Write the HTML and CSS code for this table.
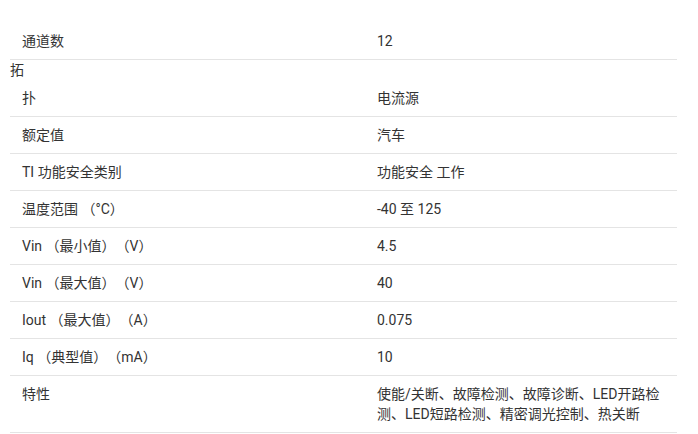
FILE: index.html
```html
<!DOCTYPE html>
<html lang="zh">
<head>
<meta charset="utf-8">
<link rel="stylesheet" href="styles.css">
</head>
<body>
<div class="specs">
  <div class="row"><div class="k">通道数</div><div class="v">12</div></div>
  <div class="stray">拓</div>
  <div class="row"><div class="k">扑</div><div class="v">电流源</div></div>
  <div class="row"><div class="k">额定值</div><div class="v">汽车</div></div>
  <div class="row"><div class="k">TI 功能安全类别</div><div class="v">功能安全 工作</div></div>
  <div class="row"><div class="k">温度范围 （°C）</div><div class="v">-40 至 125</div></div>
  <div class="row"><div class="k">Vin （最小值）（V）</div><div class="v">4.5</div></div>
  <div class="row"><div class="k">Vin （最大值）（V）</div><div class="v">40</div></div>
  <div class="row"><div class="k">Iout （最大值）（A）</div><div class="v">0.075</div></div>
  <div class="row"><div class="k">Iq （典型值）（mA）</div><div class="v">10</div></div>
  <div class="row"><div class="k">特性</div><div class="v">使能/关断、故障检测、故障诊断、LED开路检测、LED短路检测、精密调光控制、热关断</div></div>
</div>
</body>
</html>
```

FILE: styles.css
```css
html, body {
  margin: 0;
  padding: 0;
  background: #ffffff;
}
body {
  font-family: Roboto, "Noto Sans CJK SC", sans-serif;
  font-size: 14px;
  line-height: 20px;
  color: #333333;
  text-spacing-trim: space-all;
}
.specs {
  width: 667px;
  margin: 23px 0 0 10px;
}
.row {
  display: flex;
  border-bottom: 1px solid #e4e4e4;
}
.k {
  width: 331px;
  padding: 8px 12px;
  flex: none;
}
.v {
  flex: 1;
  padding: 8px 12px;
}
.stray {
  height: 20px;
}
```
